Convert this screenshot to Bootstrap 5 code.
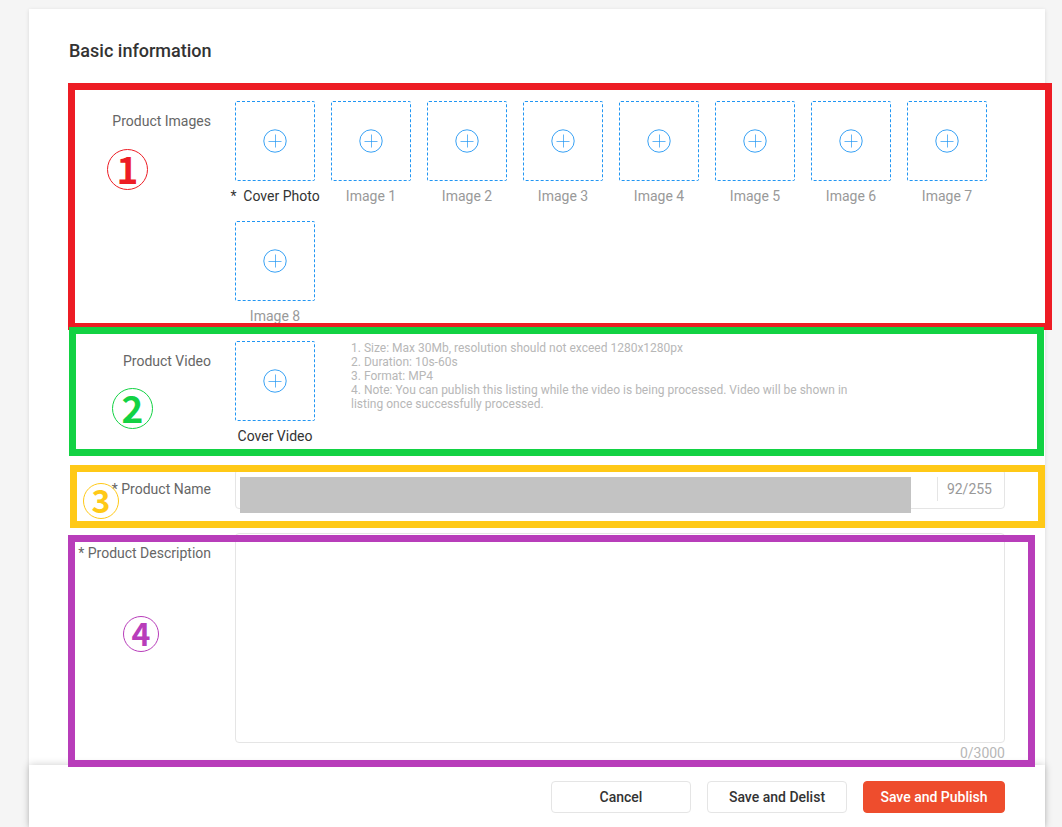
<!DOCTYPE html>
<html lang="en">
<head>
<meta charset="utf-8">
<meta name="viewport" content="width=device-width, initial-scale=1">
<title>Basic information</title>
<link href="https://cdn.jsdelivr.net/npm/bootstrap@5.3.0/dist/css/bootstrap.min.css" rel="stylesheet">
<style>
  body { background: #f5f5f5; font-family: Roboto, "Liberation Sans", sans-serif; font-size: 14px; line-height: 20px; color: #333; }
  .sheet { margin: 9px 17px 0 29px; box-shadow: 0 1px 4px rgba(0,0,0,.12); }
  .sheet-body { padding: 32px 40px 2px; }
  .sheet-title { font-size: 18px; line-height: 20px; font-weight: 500; margin-bottom: 40px; }
  .field { display: grid; grid-template-columns: 142px minmax(0, 1fr); column-gap: 24px; }
  .field-images { padding-bottom: 10px; }
  .field-video { margin-bottom: 18px; }
  .field-label { line-height: 40px; color: #666; text-align: right; white-space: nowrap; }
  .tiles { gap: 10px 16px; }
  .tile { width: 80px; }
  .tile-btn { width: 80px; height: 80px; border: 1px dashed #2196f3; border-radius: 2px; background: #fff; }
  .tile-btn svg { display: block; }
  .tile-caption { line-height: 30px; white-space: pre; color: #999; }
  .tile-caption.strong { color: #333; }
  .hints { font-size: 12px; line-height: 14px; color: #b7b7b7; max-width: 500px; margin-left: 36px; }
  .line-box, .area-box { border: 1px solid #e5e5e5; border-radius: 4px; background: #fff; }
  .line-box { height: 40px; }
  .line-box input { border: 0; background: none; box-shadow: none; }
  .line-count { border-left: 1px solid #e5e5e5; height: 24px; line-height: 24px; padding: 0 12px 0 9px; color: #999; }
  .redacted { left: 4px; right: 93px; top: 7px; height: 36px; background: #c3c3c3; }
  .area-box { display: block; width: 100%; height: 210px; resize: none; }
  .area-count { color: #b7b7b7; }
  .sheet-foot { padding: 16px 40px 14px; gap: 16px; box-shadow: 0 0 8px rgba(0,0,0,.2); }
  .act { height: 32px; min-width: 140px; padding: 0 16px; font-size: 14px; line-height: 20px; font-weight: 500; border-radius: 4px; }
  .act-plain { border: 1px solid #e5e5e5; background: #fff; color: #333; }
  .act-main { min-width: 142px; border: 1px solid #ee4d2d; background: #ee4d2d; color: #fff; }

  /* numbered call-outs laid over the form */
  .frame { border: 7px solid var(--ink); pointer-events: none; z-index: 5; }
  .disc { color: var(--ink); border: 1px solid var(--ink); border-radius: 50%; z-index: 6; display: flex; align-items: center; justify-content: center; padding-bottom: 4px; font-family: "Noto Sans CJK JP", sans-serif; font-weight: 700; width: 41px; height: 41px; font-size: 37px; line-height: 36px; }
  .disc-sm { width: 36px; height: 36px; font-size: 32px; line-height: 32px; }
  .red { --ink: #ed1c24; } .green { --ink: #12d243; } .gold { --ink: #ffc917; } .violet { --ink: #b83dba; }
  .frame.red { inset: -18px -47px 11px -1px; }
  .frame.green { inset: -14px -39px -5px 0; }
  .frame.gold { inset: -4px -40px -19px 1px; }
  .frame.violet { inset: 2px -30px -4px -1px; }
  .disc.red { left: 38px; top: 48px; }
  .disc.green { left: 43px; top: 47px; }
  .disc.gold { left: 14px; top: 14px; }
  .disc.violet { left: 54px; top: 83px; }
</style>
</head>
<body>
<svg class="d-none" aria-hidden="true">
  <symbol id="plus" viewBox="0 0 24 24"><g fill="none" stroke="#2196f3"><circle cx="12" cy="12" r="11.2" stroke-width=".9"/><path d="M5.500 12.500H18.500M12.500 5.500V18.500" stroke-width=".7"/></g></symbol>
</svg>
<main class="sheet bg-white">
  <form class="sheet-body">
    <h1 class="sheet-title">Basic information</h1>

    <section class="field field-images position-relative">
      <div class="field-label">Product Images</div>
      <div class="tiles d-flex flex-wrap" id="tiles"></div>
      <div class="frame red position-absolute"></div>
      <div class="disc red position-absolute">1</div>
    </section>

    <section class="field field-video position-relative">
      <div class="field-label">Product Video</div>
      <div class="d-flex">
        <div class="tile flex-shrink-0 d-flex flex-column align-items-center">
          <button type="button" class="tile-btn p-0 d-flex align-items-center justify-content-center" aria-label="Cover Video"><svg width="24" height="24"><use href="#plus"/></svg></button>
          <span class="tile-caption strong">Cover Video</span>
        </div>
        <div class="hints">1. Size: Max 30Mb, resolution should not exceed 1280x1280px<br>2. Duration: 10s-60s<br>3. Format: MP4<br>4. Note: You can publish this listing while the video is being processed. Video will be shown in listing once successfully processed.</div>
      </div>
      <div class="frame green position-absolute"></div>
      <div class="disc green position-absolute">2</div>
    </section>

    <section class="field position-relative mb-4">
      <label class="field-label" for="pname">* Product Name</label>
      <div class="line-box position-relative d-flex align-items-center">
        <input id="pname" type="text" class="form-control flex-fill">
        <span class="line-count">92/255</span>
        <div class="redacted position-absolute"></div>
      </div>
      <div class="frame gold position-absolute"></div>
      <div class="disc disc-sm gold position-absolute">3</div>
    </section>

    <section class="field position-relative">
      <label class="field-label" for="pdesc">* Product Description</label>
      <div>
        <textarea id="pdesc" class="area-box"></textarea>
        <div class="area-count text-end">0/3000</div>
      </div>
      <div class="frame violet position-absolute"></div>
      <div class="disc disc-sm violet position-absolute">4</div>
    </section>
  </form>
  <footer class="sheet-foot bg-white d-flex justify-content-end">
    <button type="button" class="act act-plain">Cancel</button>
    <button type="button" class="act act-plain">Save and Delist</button>
    <button type="button" class="act act-main">Save and Publish</button>
  </footer>
</main>
<script src="https://cdn.jsdelivr.net/npm/bootstrap@5.3.0/dist/js/bootstrap.bundle.min.js"></script>
<script>
  const names = ['*  Cover Photo', ...Array.from({ length: 8 }, (_, i) => 'Image ' + (i + 1))];
  document.getElementById('tiles').innerHTML = names.map((n, i) => `
    <div class="tile d-flex flex-column align-items-center">
      <button type="button" class="tile-btn p-0 d-flex align-items-center justify-content-center" aria-label="${n}"><svg width="24" height="24"><use href="#plus"/></svg></button>
      <span class="tile-caption ${i ? '' : 'strong'}">${n}</span>
    </div>`).join('');
</script>
</body>
</html>
